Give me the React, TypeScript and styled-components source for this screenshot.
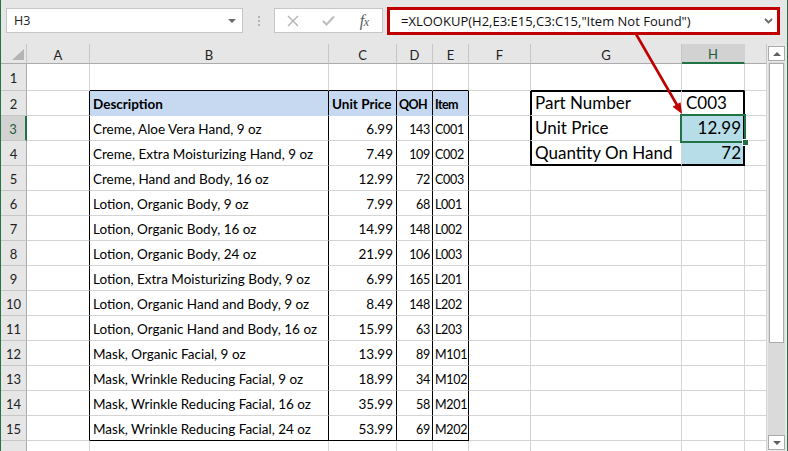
import React from "react";
import styled, { createGlobalStyle } from "styled-components";

const GRID = "#d4d4d4";
const GREEN = "#217346";
const BLUE_HEAD = "#c6d9f0";
const BLUE_CELL = "#b7dee8";
const RED = "#c00000";

const Global = createGlobalStyle`
  html, body { margin: 0; padding: 0; background: #fff; }
  body { font-family: "Lato", "Liberation Sans", sans-serif; }
  * { box-sizing: border-box; }
`;

const Window = styled.div`
  position: relative;
  width: 788px;
  height: 451px;
  border-left: 1px solid ${GREEN};
  border-right: 1px solid ${GREEN};
  background: #e6e6e6;
  display: flex;
  flex-direction: column;
  overflow: hidden;
`;

const FormulaRow = styled.div`
  height: 44px;
  flex: none;
  display: flex;
  align-items: flex-start;
  padding: 7px 0 0 5px;
`;

const NameBox = styled.div`
  margin-top: 1px;
  width: 237px;
  height: 25px;
  background: #fff;
  border: 1px solid #c6c6c6;
  display: flex;
  align-items: center;
  justify-content: space-between;
  padding: 0 6px 0 7px;
  font-family: "Open Sans", sans-serif;
  font-size: 12.5px;
  color: #222;
`;

const DropTriangle = styled.span`
  width: 0;
  height: 0;
  border-left: 4px solid transparent;
  border-right: 4px solid transparent;
  border-top: 4px solid #6a6a6a;
`;

const Grip = styled.div`
  width: 31px;
  height: 28px;
  display: flex;
  flex-direction: column;
  align-items: center;
  justify-content: center;
  gap: 2px;
`;

const GripDot = styled.span`
  width: 2px;
  height: 2px;
  background: #b4b4b4;
`;

const ButtonGroup = styled.div`
  margin-top: 1px;
  width: 109px;
  height: 25px;
  background: #fff;
  border: 1px solid #c6c6c6;
  display: flex;
  align-items: center;
`;

const BarButton = styled.div`
  width: 36px;
  height: 23px;
  display: flex;
  align-items: center;
  justify-content: center;
`;

const FxLabel = styled.span`
  font-family: "Liberation Serif", serif;
  font-style: italic;
  font-size: 16px;
  color: #595959;
  letter-spacing: -0.5px;
  small {
    font-size: 12px;
  }
`;

const FormulaBox = styled.div`
  margin-left: 4px;
  width: 393px;
  height: 28px;
  border: 3px solid ${RED};
  background: #fff;
  display: flex;
  align-items: center;
  justify-content: space-between;
  padding: 0 4px 1px 11px;
  font-family: "Open Sans", sans-serif;
  font-size: 13px;
  color: #111;
  white-space: nowrap;
`;

const Sheet = styled.div`
  flex: 1;
  display: flex;
  min-height: 0;
`;

const Grid = styled.div`
  display: grid;
  grid-template-columns: 26px 63px 239px 68px 36px 36px 62px 151px 63px 22px;
  grid-template-rows: 20px 27px repeat(15, 25px);
  width: 766px;
  overflow: hidden;
  align-content: start;
`;

const Corner = styled.div`
  background: #e6e6e6;
  border-right: 1px solid #c6c6c6;
  border-bottom: 1px solid #ababab;
  display: flex;
  align-items: flex-end;
  justify-content: flex-end;
  padding: 0 2px 3px 0;
`;

const ColHead = styled.div<{ $active?: boolean }>`
  background: ${(p) => (p.$active ? "#d2d2d2" : "#e6e6e6")};
  border-right: 1px solid ${(p) => (p.$active ? "#d2d2d2" : "#c6c6c6")};
  border-bottom: ${(p) => (p.$active ? `2px solid ${GREEN}` : "1px solid #ababab")};
  color: ${(p) => (p.$active ? "#1f5c3a" : "#222")};
  display: flex;
  align-items: center;
  justify-content: center;
  font-size: 13px;
  padding-top: 2px;
`;

const RowHead = styled.div<{ $active?: boolean }>`
  background: ${(p) => (p.$active ? "#d2d2d2" : "#e6e6e6")};
  border-right: ${(p) => (p.$active ? `2px solid ${GREEN}` : "1px solid #ababab")};
  border-bottom: 1px solid #c6c6c6;
  color: ${(p) => (p.$active ? "#1f5c3a" : "#222")};
  display: flex;
  align-items: center;
  justify-content: center;
  font-size: 13px;
  padding-top: 1px;
`;

type CellProps = {
  $fill?: string;
  $right?: string;
  $bottom?: string;
  $edges?: string;
  $align?: "left" | "right";
  $bold?: boolean;
  $big?: boolean;
  $tight?: boolean;
};

const Cell = styled.div<CellProps>`
  background: ${(p) => p.$fill ?? "#fff"};
  border-right: 1px solid ${(p) => p.$right ?? GRID};
  border-bottom: 1px solid ${(p) => p.$bottom ?? GRID};
  box-shadow: ${(p) => p.$edges ?? "none"};
  display: flex;
  align-items: flex-end;
  justify-content: ${(p) => (p.$align === "right" ? "flex-end" : "flex-start")};
  padding: ${(p) => (p.$big ? "0 3px 2px 4px" : p.$tight ? "0 2px 3px 2px" : "0 3px 3px 3px")};
  font-size: ${(p) => (p.$big ? "17px" : p.$tight ? "12.5px" : "13.5px")};
  letter-spacing: ${(p) => (p.$tight ? (p.$bold ? "-0.6px" : "-0.3px") : "0")};
  font-weight: ${(p) => (p.$bold ? 700 : 400)};
  color: #000;
  white-space: nowrap;
  min-width: 0;
`;

const ActiveCell = styled(Cell)`
  position: relative;
  &::before {
    content: "";
    position: absolute;
    left: -2px;
    top: -2px;
    right: -2px;
    bottom: -3px;
    border: 2px solid ${GREEN};
  }
  &::after {
    content: "";
    position: absolute;
    right: -4px;
    bottom: -5px;
    width: 5px;
    height: 5px;
    background: ${GREEN};
    outline: 1px solid #fff;
  }
`;

const ScrollBar = styled.div`
  width: 20px;
  display: flex;
  flex-direction: column;
  padding: 2px 2px 0 1px;
  background: #e9e9e9;
`;

const ScrollButton = styled.div`
  height: 15px;
  flex: none;
  background: #fff;
  border: 1px solid #ababab;
  margin: 0 0 1px;
  display: flex;
  align-items: center;
  justify-content: center;
`;

const ScrollTrack = styled.div`
  flex: 1;
  background: #dadada;
  padding: 1px 1px;
  display: flex;
  flex-direction: column;
  justify-content: space-between;
`;

const ScrollThumb = styled.div`
  height: 280px;
  background: #fff;
  border: 1px solid #ababab;
`;

const Tri = styled.span<{ $down?: boolean }>`
  width: 0;
  height: 0;
  border-left: 4px solid transparent;
  border-right: 4px solid transparent;
  ${(p) => (p.$down ? "border-top: 4px solid #606060;" : "border-bottom: 4px solid #606060;")}
`;

const ArrowLayer = styled.svg`
  position: absolute;
  left: -1px;
  top: 0;
  pointer-events: none;
`;

const COLS = ["A", "B", "C", "D", "E", "F", "G", "H", "I"];

const items: [string, string, string, string][] = [
  ["Creme, Aloe Vera Hand, 9 oz", "6.99", "143", "C001"],
  ["Creme, Extra Moisturizing Hand, 9 oz", "7.49", "109", "C002"],
  ["Creme, Hand and Body, 16 oz", "12.99", "72", "C003"],
  ["Lotion, Organic Body, 9 oz", "7.99", "68", "L001"],
  ["Lotion, Organic Body, 16 oz", "14.99", "148", "L002"],
  ["Lotion, Organic Body, 24 oz", "21.99", "106", "L003"],
  ["Lotion, Extra Moisturizing Body, 9 oz", "6.99", "165", "L201"],
  ["Lotion, Organic Hand and Body, 9 oz", "8.49", "148", "L202"],
  ["Lotion, Organic Hand and Body, 16 oz", "15.99", "63", "L203"],
  ["Mask, Organic Facial, 9 oz", "13.99", "89", "M101"],
  ["Mask, Wrinkle Reducing Facial, 9 oz", "18.99", "34", "M102"],
  ["Mask, Wrinkle Reducing Facial, 16 oz", "35.99", "58", "M201"],
  ["Mask, Wrinkle Reducing Facial, 24 oz", "53.99", "69", "M202"],
];

const lookup: Record<number, [string, string, "left" | "right"]> = {
  2: ["Part Number", "C003", "left"],
  3: ["Unit Price", "12.99", "right"],
  4: ["Quantity On Hand", "72", "right"],
};

type Spec = CellProps & { text?: string; active?: boolean };

function spec(r: number, ci: number): Spec {
  const s: Spec = {};
  const inTable = r >= 2 && r <= 15;
  if (inTable && ci <= 4) s.$right = "#000";
  if ((r === 1 || r === 15) && ci >= 1 && ci <= 4) s.$bottom = "#000";
  if (inTable && ci >= 1 && ci <= 4) {
    s.$tight = ci === 3 || ci === 4;
    if (r === 2) {
      s.text = ["Description", "Unit Price", "QOH", "Item"][ci - 1];
      s.$fill = BLUE_HEAD;
      s.$bold = true;
      s.$bottom = BLUE_HEAD;
    } else {
      s.text = items[r - 3][ci - 1];
      s.$align = ci === 2 || ci === 3 ? "right" : "left";
    }
  }
  // lookup box G2:H4
  if (r === 1 && (ci === 6 || ci === 7)) s.$bottom = "#000";
  if (r >= 2 && r <= 4) {
    if (ci === 5) s.$right = "#000";
    if (ci === 6 || ci === 7) {
      const edges: string[] = [];
      if (ci === 6) edges.push("inset 1px 0 0 #000");
      if (ci === 7) {
        edges.push("inset -1px 0 0 #000");
        s.$right = "#000";
      }
      if (r === 2) edges.push("inset 0 1px 0 #000");
      if (r === 4) {
        edges.push("inset 0 -1px 0 #000");
        s.$bottom = "#000";
      }
      s.$edges = edges.join(", ");
      s.$big = true;
      const [label, value, align] = lookup[r];
      s.text = ci === 6 ? label : value;
      if (ci === 7) {
        s.$align = align;
        if (r >= 3) s.$fill = BLUE_CELL;
        if (r === 3) {
          s.$bottom = BLUE_CELL;
          s.active = true;
        }
      }
    }
  }
  return s;
}

const rows = Array.from({ length: 16 }, (_, i) => i + 1);

function XIcon() {
  return (
    <svg width="12" height="12" viewBox="0 0 12 12">
      <path d="M1 1 L11 11 M11 1 L1 11" stroke="#b0b0b0" strokeWidth="1.3" fill="none" />
    </svg>
  );
}

function CheckIcon() {
  return (
    <svg width="13" height="11" viewBox="0 0 13 11">
      <path d="M1 6 L4.5 9.5 L12 1.5" stroke="#bdbdbd" strokeWidth="2" fill="none" />
    </svg>
  );
}

function Chevron() {
  return (
    <svg width="9" height="6" viewBox="0 0 9 6">
      <path d="M1 1 L4.5 4.5 L8 1" stroke="#6b6b6b" strokeWidth="1.8" fill="none" />
    </svg>
  );
}

export default function App() {
  return (
    <Window>
      <Global />
      <FormulaRow>
        <NameBox>
          <span>H3</span>
          <DropTriangle />
        </NameBox>
        <Grip>
          <GripDot />
          <GripDot />
          <GripDot />
        </Grip>
        <ButtonGroup>
          <BarButton>
            <XIcon />
          </BarButton>
          <BarButton>
            <CheckIcon />
          </BarButton>
          <BarButton>
            <FxLabel>
              f<small>x</small>
            </FxLabel>
          </BarButton>
        </ButtonGroup>
        <FormulaBox>
          <span>=XLOOKUP(H2,E3:E15,C3:C15,"Item Not Found")</span>
          <Chevron />
        </FormulaBox>
      </FormulaRow>
      <Sheet>
        <Grid>
          <Corner>
            <svg width="12" height="11" viewBox="0 0 12 11">
              <polygon points="12,0 12,11 0,11" fill="#b4b4b4" />
            </svg>
          </Corner>
          {COLS.map((c) => (
            <ColHead key={c} $active={c === "H"}>
              {c === "I" ? "" : c}
            </ColHead>
          ))}
          {rows.map((r) => (
            <React.Fragment key={r}>
              <RowHead $active={r === 3}>{r <= 15 ? r : ""}</RowHead>
              {COLS.map((c, ci) => {
                const { text, active, ...props } = spec(r, ci);
                const Comp = active ? ActiveCell : Cell;
                return (
                  <Comp key={c} {...props}>
                    {text}
                  </Comp>
                );
              })}
            </React.Fragment>
          ))}
        </Grid>
        <ScrollBar>
          <ScrollButton>
            <Tri />
          </ScrollButton>
          <ScrollTrack>
            <ScrollThumb />
          </ScrollTrack>
          <ScrollButton>
            <Tri $down />
          </ScrollButton>
        </ScrollBar>
      </Sheet>
      <ArrowLayer width="788" height="451" viewBox="0 0 788 451">
        <line x1="636" y1="34" x2="677" y2="105" stroke={RED} strokeWidth="2.6" />
        <polygon points="682,114 672.6,106.7 680.5,102.2" fill={RED} />
      </ArrowLayer>
    </Window>
  );
}
